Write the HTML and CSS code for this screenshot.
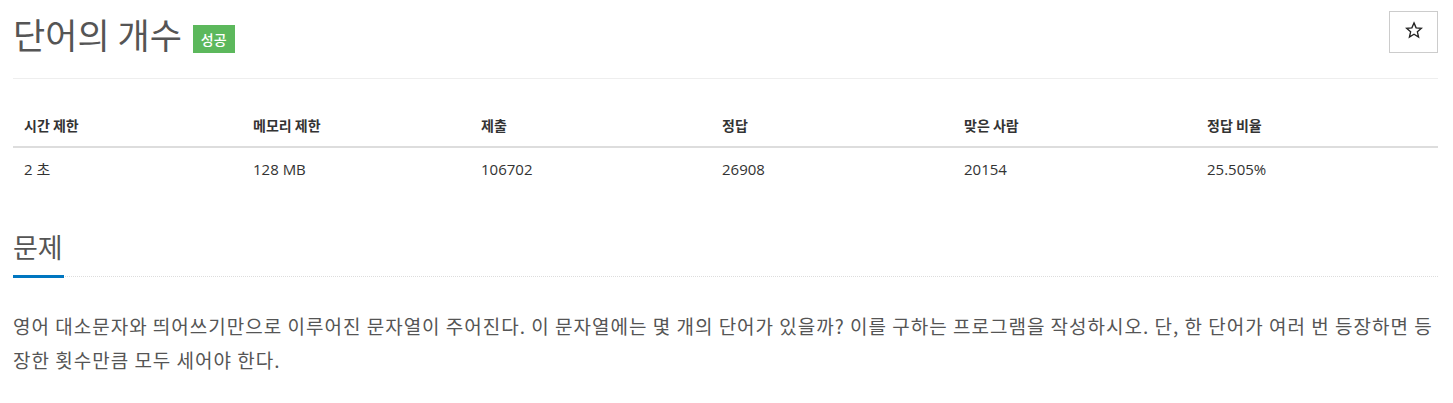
FILE: index.html
```html
<!DOCTYPE html>
<html>
<head>
  <title>단어의 개수</title>
  <link rel="stylesheet" href="styles.css">
</head>
<body>
  <div class="container">

    <div class="page-header">
      <h1>단어의 개수 <span class="label-success">성공</span></h1>
      <button class="btn-star">
        <svg width="18" height="18" viewBox="0 0 24 24"><path d="M12 2.5l2.8 6.6 7.1.6-5.4 4.7 1.6 7-6.1-3.7-6.1 3.7 1.6-7L2.1 9.7l7.1-.6z" fill="none" stroke="#222" stroke-width="1.8" stroke-linejoin="miter"/></svg>
      </button>
    </div>

    <table class="info-table">
      <thead>
        <tr>
          <th class="col-1">시간 제한</th>
          <th class="col-2">메모리 제한</th>
          <th class="col-3">제출</th>
          <th class="col-4">정답</th>
          <th class="col-5">맞은 사람</th>
          <th>정답 비율</th>
        </tr>
      </thead>
      <tbody>
        <tr>
          <td>2 초</td>
          <td>128 MB</td>
          <td>106702</td>
          <td>26908</td>
          <td>20154</td>
          <td>25.505%</td>
        </tr>
      </tbody>
    </table>

    <section class="problem">
      <div class="headline">
        <h2>문제</h2>
      </div>
      <p class="problem-text">영어 대소문자와 띄어쓰기만으로 이루어진 문자열이 주어진다. 이 문자열에는 몇 개의 단어가 있을까? 이를 구하는 프로그램을 작성하시오. 단, 한 단어가 여러 번 등장하면 등장한 횟수만큼 모두 세어야 한다.</p>
    </section>

  </div>
</body>
</html>
```

FILE: styles.css
```css
body { margin: 0; background: #fff; font-family: "Open Sans", "Noto Sans CJK KR", sans-serif; color: #333; }
.container { padding: 0 15px 0 13px; }

.page-header { display: flex; justify-content: space-between; align-items: flex-start; border-bottom: 1px solid #eee; padding-top: 11px; height: 67px; box-sizing: content-box; }
.page-header h1 { margin: 0; font-family: "Noto Sans CJK KR", sans-serif; font-weight: 400; font-size: 35px; line-height: 46px; color: #555; display: flex; align-items: center; }
.label-success { display: inline-block; margin-left: 11px; margin-top: 9px; background: #5cb85c; color: #fff; font-size: 14px; font-weight: 500; line-height: 28px; height: 28px; padding: 0 8px; }
.btn-star { width: 49px; height: 42px; border: 1px solid #ccc; background: #fff; padding: 0 0 4px; display: flex; align-items: center; justify-content: center; }

.info-table { width: 100%; border-collapse: collapse; margin-top: 25px; font-size: 14px; }
.info-table th, .info-table td { text-align: left; padding: 8px 11px; line-height: 20px; }
.info-table th { font-family: "Noto Sans CJK KR", sans-serif; font-weight: 700; border-bottom: 2px solid #ddd; padding-top: 11px; padding-bottom: 11px; }
.info-table td { color: #333; padding-top: 11px; font-size: 15px; }
.col-1 { width: 207px; }
.col-2 { width: 206px; }
.col-3 { width: 219px; }
.col-4 { width: 220px; }
.col-5 { width: 221px; }

.problem { margin-top: 30px; }
.headline { display: flex; border-bottom: 1px dotted #ddd; }
.headline h2 { margin: 0 0 -2px; font-family: "Noto Sans CJK KR", sans-serif; font-weight: 400; font-size: 27px; line-height: 40px; color: #555; padding: 10px 1px 8px 0; border-bottom: 3px solid #0076c0; }
.problem-text { margin: 32px 0 0; font-family: "Noto Sans CJK KR", sans-serif; font-size: 19px; letter-spacing: 1px; line-height: 34px; color: #555; word-break: break-all; }
```
